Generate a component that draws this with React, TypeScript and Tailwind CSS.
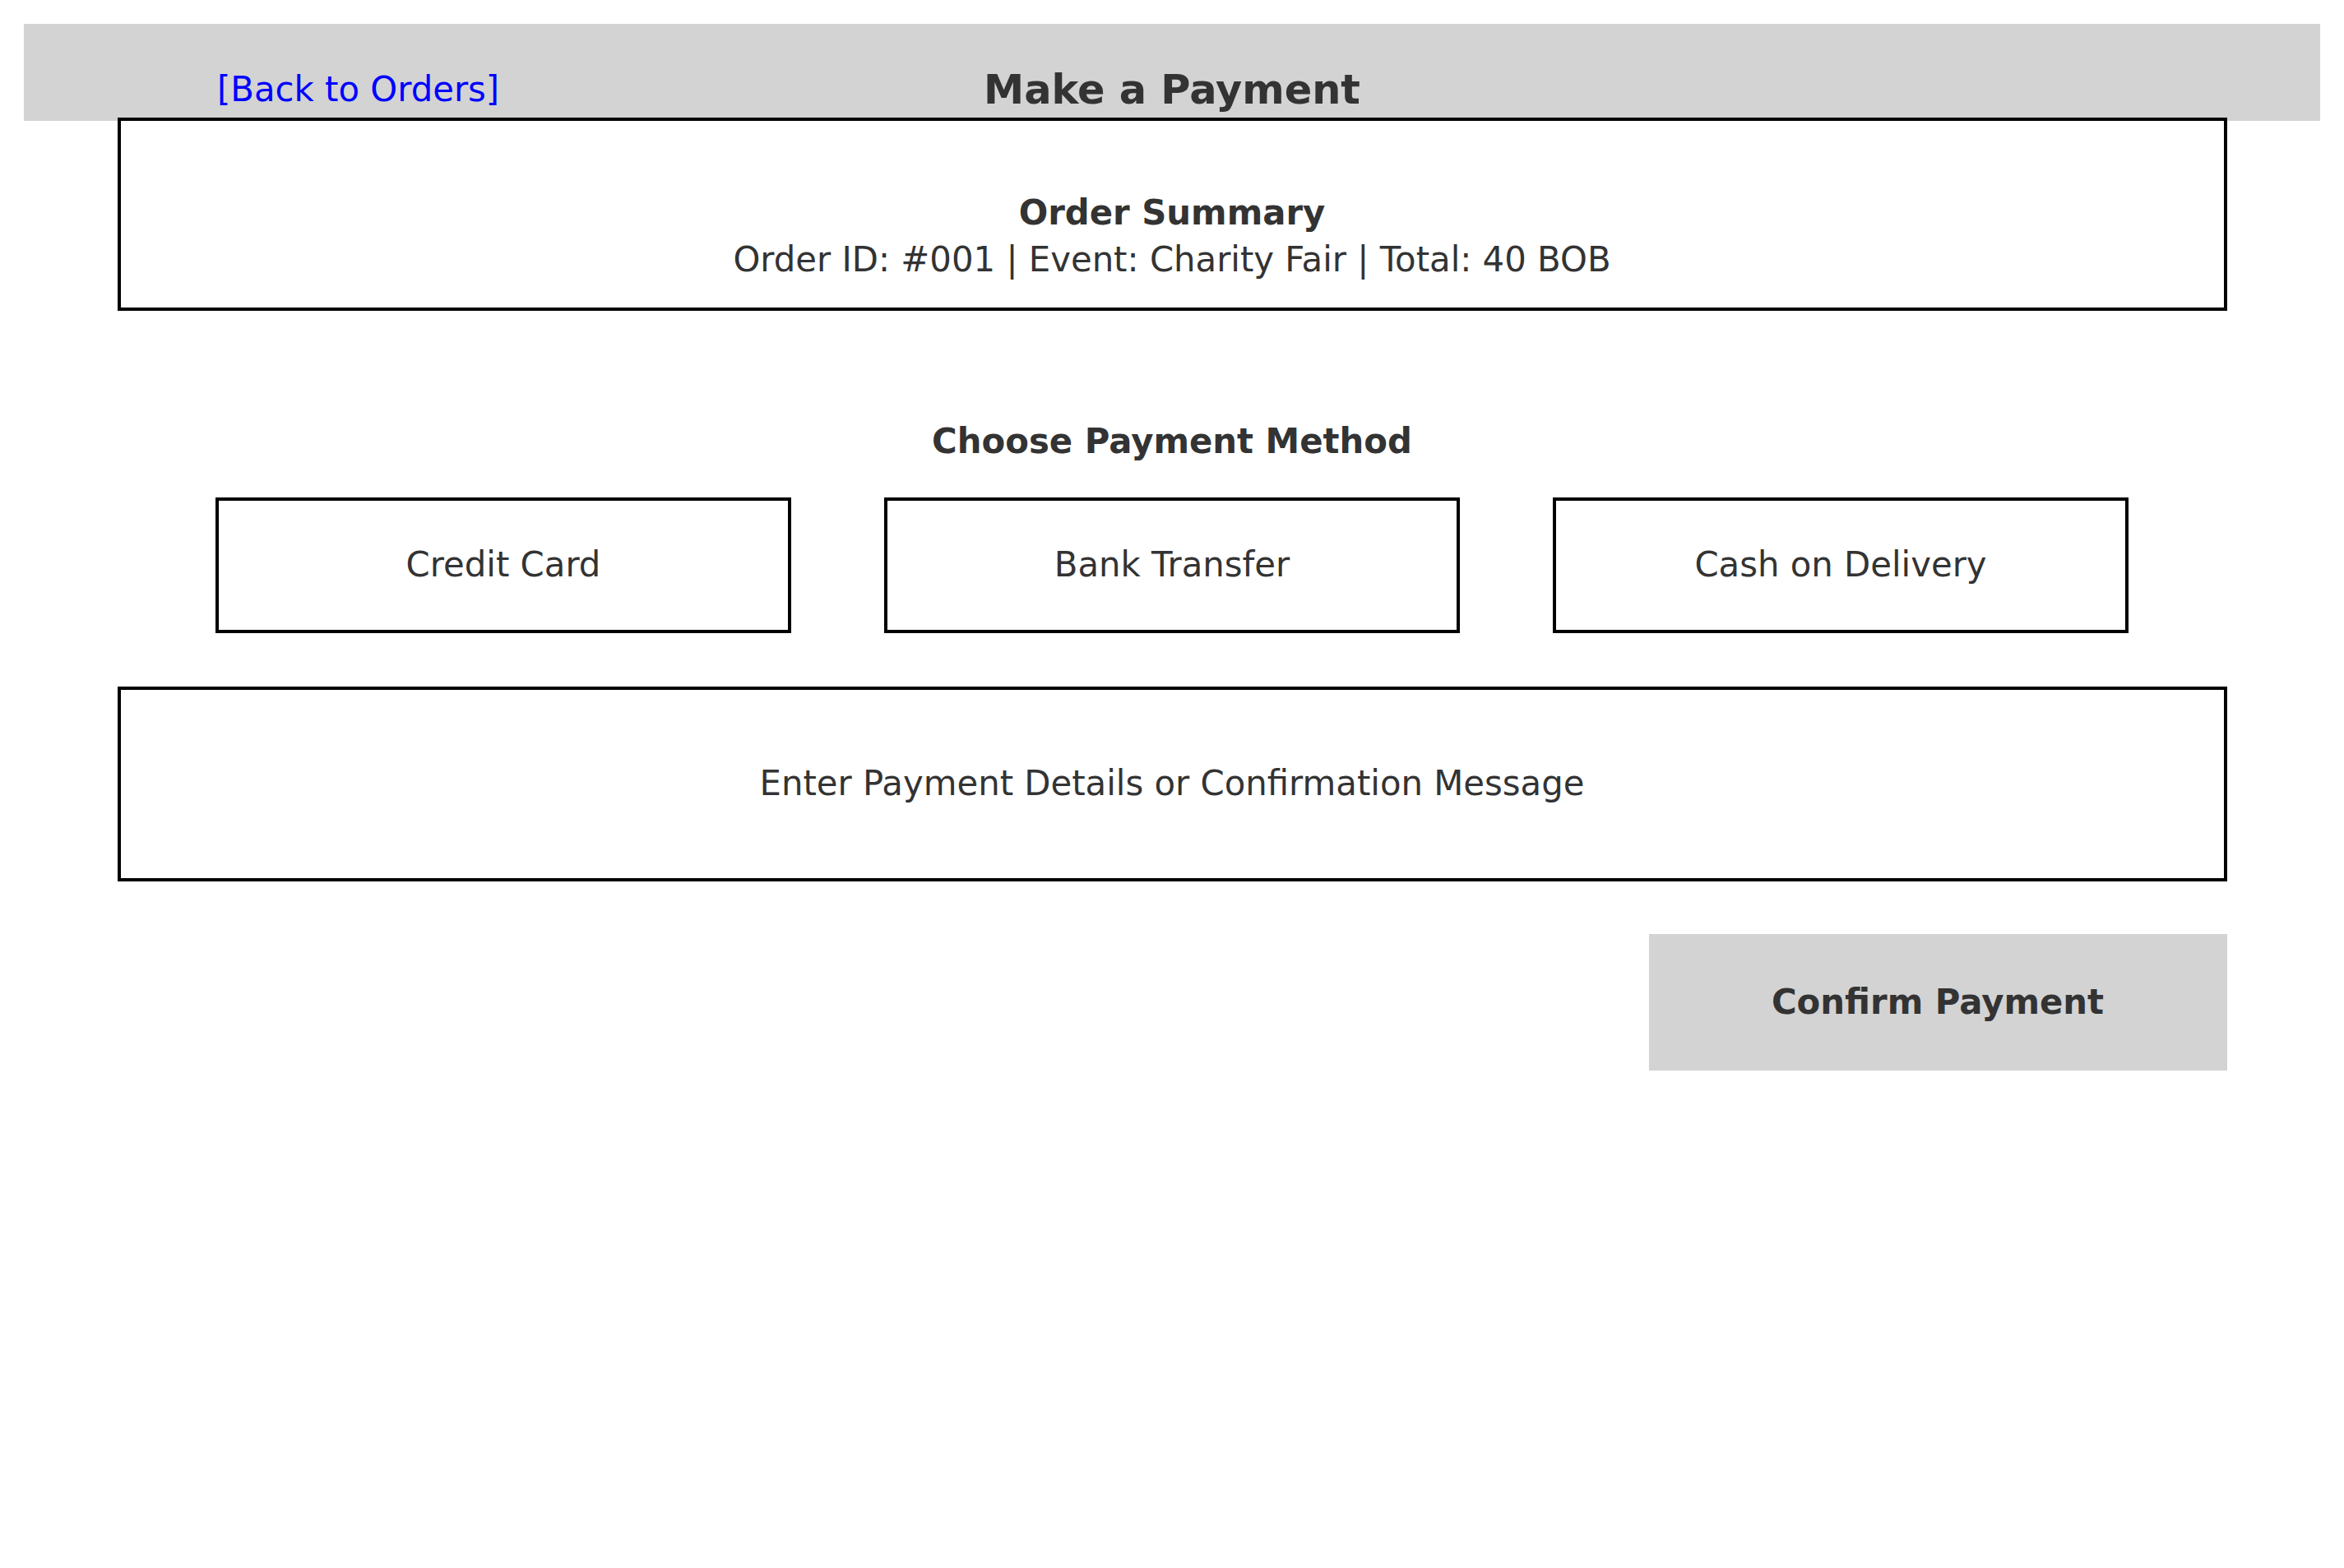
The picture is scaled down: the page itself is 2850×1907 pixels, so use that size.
import React from "react";

const methods = ["Credit Card", "Bank Transfer", "Cash on Delivery"];

export default function App() {
  return (
    <div className="w-[2850px] h-[1907px] bg-white pt-[29px] font-['DejaVu_Sans',sans-serif] text-[#333333]">
      {/* header bar */}
      <div className="mx-[29px] h-[118px] bg-[#d3d3d3] grid grid-cols-[1fr_auto_1fr] items-start">
        <div className="pl-[235px] pt-[59px]">
          <a href="#" className="block text-[41.8px] leading-none text-[#0000ff]">
            [Back to Orders]
          </a>
        </div>
        <h1 className="pt-[56px] text-[49.4px] leading-none font-bold">Make a Payment</h1>
        <div></div>
      </div>

      <div className="w-[2565px] mx-auto">
        {/* order summary */}
        <div className="-mt-[4px] h-[235px] border-4 border-black bg-white text-center pt-[83px] text-[41.8px] leading-[57px]">
          <div className="font-bold">Order Summary</div>
          <div>Order ID: #001 | Event: Charity Fair | Total: 40 BOB</div>
        </div>

        <h2 className="mt-[130px] text-center text-[41.8px] leading-[57px] font-bold">
          Choose Payment Method
        </h2>

        <div className="mt-[40px] flex justify-center gap-[113px]">
          {methods.map((m) => (
            <button
              key={m}
              className="w-[700px] h-[165px] border-4 border-black flex items-center justify-center text-[41.8px]"
            >
              {m}
            </button>
          ))}
        </div>

        {/* details area */}
        <div className="mt-[65px] h-[237px] border-4 border-black flex items-center justify-center text-[41.8px]">
          Enter Payment Details or Confirmation Message
        </div>

        <div className="mt-[64px] flex justify-end">
          <button className="w-[703px] h-[166px] bg-[#d3d3d3] text-[41.8px] font-bold flex items-center justify-center">
            Confirm Payment
          </button>
        </div>
      </div>
    </div>
  );
}
